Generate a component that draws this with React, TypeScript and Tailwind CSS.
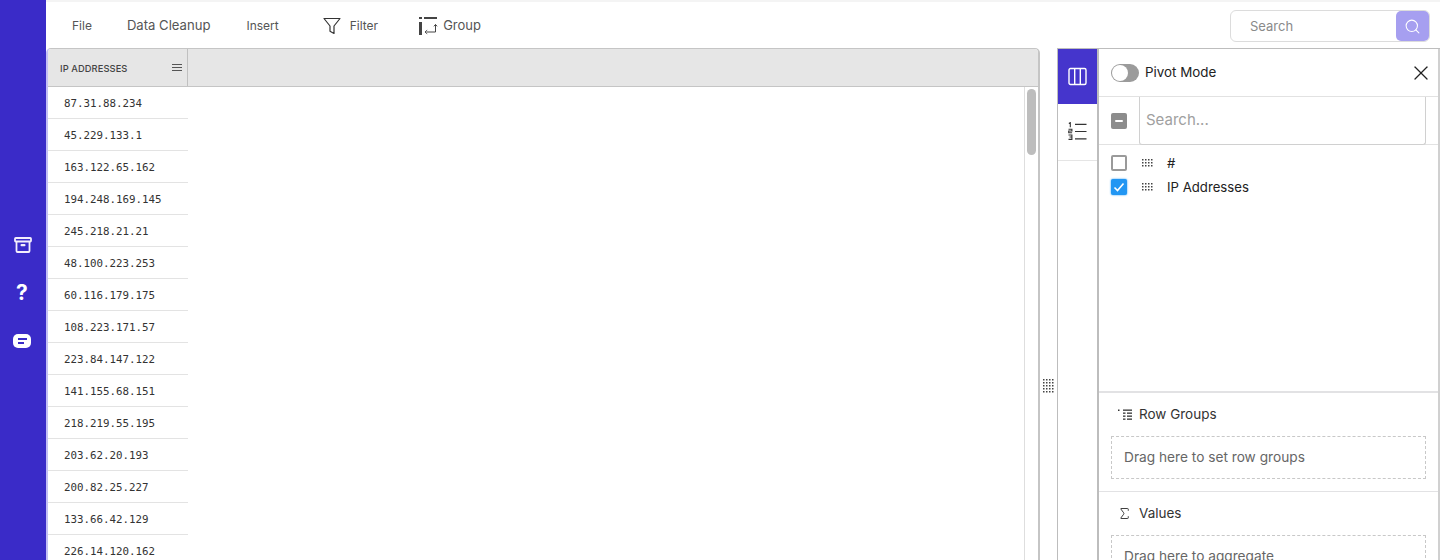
import React from "react";
import { Search, X, Sigma } from "lucide-react";

const IPS = [
  "87.31.88.234",
  "45.229.133.1",
  "163.122.65.162",
  "194.248.169.145",
  "245.218.21.21",
  "48.100.223.253",
  "60.116.179.175",
  "108.223.171.57",
  "223.84.147.122",
  "141.155.68.151",
  "218.219.55.195",
  "203.62.20.193",
  "200.82.25.227",
  "133.66.42.129",
  "226.14.120.162",
];

const Grip: React.FC<{ cols?: number; rows?: number }> = ({ cols = 4, rows = 4 }) => (
  <svg width={cols * 3} height={rows * 3} viewBox={`0 0 ${cols * 3} ${rows * 3}`} className="block shrink-0">
    {Array.from({ length: cols * rows }).map((_, i) => (
      <rect key={i} x={(i % cols) * 3} y={Math.floor(i / cols) * 3} width="1.5" height="1.5" fill="#444" />
    ))}
  </svg>
);

const ArchiveIcon = () => (
  <svg width="18" height="18" viewBox="0 0 18 18" fill="none" stroke="#f3eefc" strokeWidth="1.8" className="mr-px">
    <rect x="1" y="2" width="16" height="3.500" rx="0.800" />
    <path d="M2.500 5.500v9.500a1 1 0 0 0 1 1h11a1 1 0 0 0 1-1V5.500" />
    <rect x="6.500" y="8" width="5" height="2.200" rx="1" fill="#f3eefc" stroke="none" />
  </svg>
);

const FunnelIcon = () => (
  <svg width="18" height="18" viewBox="0 0 18 18" fill="none" stroke="#333" strokeWidth="1.200" className="block">
    <path d="M1 1.500h16l-6 7.500v7.500l-4-2.200V9z" strokeLinejoin="round" />
  </svg>
);

const GroupIcon = () => (
  <svg width="20" height="20" viewBox="0 0 20 20" fill="none" stroke="#444" strokeWidth="1" className="block">
    <rect x="1" y="1" width="3" height="2" fill="#444" stroke="none" />
    <rect x="6" y="1" width="13" height="2" fill="#444" stroke="none" />
    <rect x="1" y="6" width="3" height="13" fill="#444" stroke="none" />
    <path d="M17.500 8.500v7.500H8.500M7 16l2.200-1.800M7 16l2.200 1.800M17.500 8.500l-1.600 1.800M17.500 8.500l1.600 1.800" />
  </svg>
);

const ColumnsIcon = () => (
  <svg width="19" height="19" viewBox="0 0 19 19" fill="none" stroke="#fff" strokeWidth="1.400">
    <rect x="1" y="1.500" width="17" height="16" rx="1.500" />
    <path d="M6.700 1.500v16M12.300 1.500v16" />
  </svg>
);

const NumberedListIcon = () => (
  <svg width="19" height="19" viewBox="0 0 19 19" fill="none" stroke="#333" strokeWidth="1.200" className="block">
    <path d="M7 2.300h11.500M7 9.500h11.500M7 16.800h11.500" />
    <path d="M.8 1.400l1.500-.8v4.600M.5 7.200h3.400v1.800H.7v1.800h3.400M.5 13h3.400v2H1.500h2.400v2.400H.5" strokeWidth="1.100" />
  </svg>
);

const RowGroupIcon = () => (
  <svg width="14" height="12" viewBox="0 0 14 12" fill="#333">
    <rect x="0" y="0.500" width="1.500" height="1.500" />
    <rect x="5" y="0.500" width="9" height="1.300" />
    <rect x="5" y="3.500" width="2.500" height="1.300" />
    <rect x="9" y="3.500" width="5" height="1.300" />
    <rect x="5" y="6.500" width="2.500" height="1.300" />
    <rect x="9" y="6.500" width="5" height="1.300" />
    <rect x="5" y="9.500" width="2.500" height="1.300" />
    <rect x="9" y="9.500" width="5" height="1.300" />
  </svg>
);

export default function App() {
  return (
    <div className="flex h-[560px] w-[1440px] overflow-hidden bg-white font-['Inter',sans-serif]">
      {/* Sidebar */}
      <aside className="flex w-[46px] shrink-0 flex-col items-center bg-[#3a2bc8] pt-[236px] text-white">
        <ArchiveIcon />
        <span className="mr-[2px] mt-[26px] text-[21px] font-bold leading-[26px]">?</span>
        <div className="mr-[2px] mt-[28px] flex h-[14px] w-[18px] flex-col justify-center gap-[2px] rounded-[5px] bg-white pl-[5px]">
          <span className="h-[2px] w-[9px] bg-[#3a2bc8]" />
          <span className="h-[2px] w-[6px] bg-[#3a2bc8]" />
        </div>
      </aside>

      <div className="flex min-w-0 flex-1 flex-col">
        {/* Toolbar */}
        <header className="flex h-[48px] shrink-0 items-center border-t-2 border-[#f4f4f4] pl-[26px] pr-[10px] pt-[2px] text-[#555]">
          <span className="text-[12px]">File</span>
          <span className="ml-[35px] text-[13.100px]">Data Cleanup</span>
          <span className="ml-[36px] text-[12px]">Insert</span>
          <span className="ml-[44px] block"><FunnelIcon /></span>
          <span className="ml-[9px] text-[12px]">Filter</span>
          <span className="ml-[40px] block"><GroupIcon /></span>
          <span className="ml-[5px] text-[13px]">Group</span>
          <div className="ml-auto flex h-[32px] w-[200px] items-center rounded-[6px] border border-[#dcdcdc] pl-[19px]">
            <span className="flex-1 pt-px text-[13px] text-[#8a8a8a]">Search</span>
            <div className="flex h-[30px] w-[33px] items-center justify-center rounded-[5px] bg-[#a69ff0]">
              <Search size={17} strokeWidth={1.500} className="text-white" />
            </div>
          </div>
        </header>

        <div className="flex min-h-0 flex-1">
          {/* Grid */}
          <section className="flex w-[994px] shrink-0 flex-col overflow-hidden rounded-t-[5px] border-r-2 border-t border-[#c5c5c5] border-l-[2px] border-l-[#c4bff5]">
            <div className="flex h-[38px] shrink-0 border-b border-[#c5c5c5] bg-[#e6e6e6]">
              <div className="flex w-[140px] items-center justify-between border-r border-[#c0c0c0] pl-[12px] pr-[5px]">
                <span className="pt-[3px] text-[9.300px] font-medium tracking-[0.1px] text-[#444]">IP ADDRESSES</span>
                <div className="flex w-[10px] flex-col gap-[2px]">
                  <span className="h-px bg-[#555]" />
                  <span className="h-px bg-[#555]" />
                  <span className="h-px bg-[#555]" />
                </div>
              </div>
            </div>
            <div className="flex min-h-0 flex-1">
              <div className="flex-1">
                {IPS.map((ip) => (
                  <div
                    key={ip}
                    className="flex h-[32px] w-[140px] items-center border-b border-[#e3e3e3] pl-[16px] pt-[3px] font-['DejaVu_Sans_Mono',monospace] text-[10.800px] text-[#333]"
                  >
                    {ip}
                  </div>
                ))}
              </div>
              <div className="w-[14px] shrink-0 border-l border-[#dedede] pl-[2px] pt-[2px]">
                <div className="h-[66px] w-[9px] rounded-[5px] bg-[#bdbdbd]" />
              </div>
            </div>
          </section>

          {/* Splitter */}
          <div className="flex w-[17px] shrink-0 items-center justify-center pt-[164px]">
            <Grip cols={4} rows={5} />
          </div>

          {/* Tool panel */}
          <section className="flex min-w-0 flex-1 border-l border-t border-[#bdbdbd]">
            <div className="w-[39px] shrink-0">
              <div className="flex h-[55px] items-center justify-center bg-[#4535cc]">
                <ColumnsIcon />
              </div>
              <div className="flex h-[57px] items-center justify-center border-b border-[#e5e5e5] pb-[2px]">
                <NumberedListIcon />
              </div>
            </div>

            <div className="flex min-w-0 flex-1 flex-col border-l-2 border-r-2 border-[#bdbdbd] border-r-[#d0d0d0]">
              <div className="flex h-[48px] shrink-0 items-center border-b border-[#e2e2e2] pl-[12px] pr-[5px]">
                <div className="flex h-[18px] w-[28px] items-center rounded-full bg-[#9b9b9b]">
                  <span className="ml-px h-[16px] w-[16px] rounded-full bg-white" />
                </div>
                <span className="ml-[6px] text-[13.400px] text-[#222]">Pivot Mode</span>
                <X size={24} strokeWidth={1.300} className="ml-auto text-[#222]" />
              </div>

              <div className="flex h-[48px] shrink-0 items-center border-b border-[#e2e2e2] pl-[12px] pr-[12px]">
                <div className="flex h-[16px] w-[16px] items-center justify-center rounded-[2px] bg-[#8c8c8c]">
                  <span className="h-[2px] w-[8px] rounded-full bg-white" />
                </div>
                <div className="ml-[12px] flex h-[48px] flex-1 items-center rounded-b-[3px] border border-t-0 border-[#d0d0d0] pl-[6px] text-[15px] text-[#a0a0a0]">
                  Search...
                </div>
              </div>

              <div className="flex h-[246px] shrink-0 flex-col gap-[8px] pl-[12px] pt-[10px]">
                <div className="flex h-[16px] items-center">
                  <span className="h-[16px] w-[16px] rounded-[2px] border-2 border-[#9a9a9a]" />
                  <span className="ml-[15px]"><Grip cols={4} rows={3} /></span>
                  <span className="ml-[13px] pt-px text-[13.200px] text-[#222]">#</span>
                </div>
                <div className="flex h-[16px] items-center">
                  <span className="flex h-[16px] w-[16px] items-center justify-center rounded-[2px] bg-[#2196f3] shadow-[0_0_2px_#2196f3]">
                    <svg width="12" height="12" viewBox="0 0 12 12" fill="none" stroke="#fff" strokeWidth="1.600">
                      <path d="M1.500 6.500l3 3 6-7" />
                    </svg>
                  </span>
                  <span className="ml-[15px]"><Grip cols={4} rows={3} /></span>
                  <span className="ml-[13px] pt-px text-[13.200px] text-[#222]">IP Addresses</span>
                </div>
              </div>

              <div className="h-[100px] shrink-0 border-t-2 border-[#e2e2e4] px-[12px]">
                <div className="flex h-[43px] items-center pl-[7px]">
                  <RowGroupIcon />
                  <span className="ml-[7px] text-[13.500px] text-[#333]">Row Groups</span>
                </div>
                <div className="flex h-[43px] items-center border border-dashed border-[#c8c8c8] pl-[12px] text-[13.700px] text-[#666]">
                  Drag here to set row groups
                </div>
              </div>

              <div className="flex-1 border-t border-[#e2e2e4] px-[12px]">
                <div className="flex h-[43px] items-center pl-[6px]">
                  <Sigma size={15} strokeWidth={1.500} className="text-[#333]" />
                  <span className="ml-[7px] text-[13.500px] text-[#333]">Values</span>
                </div>
                <div className="flex h-[43px] items-center border border-dashed border-[#c8c8c8] pl-[12px] text-[13.700px] text-[#666]">
                  Drag here to aggregate
                </div>
              </div>
            </div>
          </section>
        </div>
      </div>
    </div>
  );
}
